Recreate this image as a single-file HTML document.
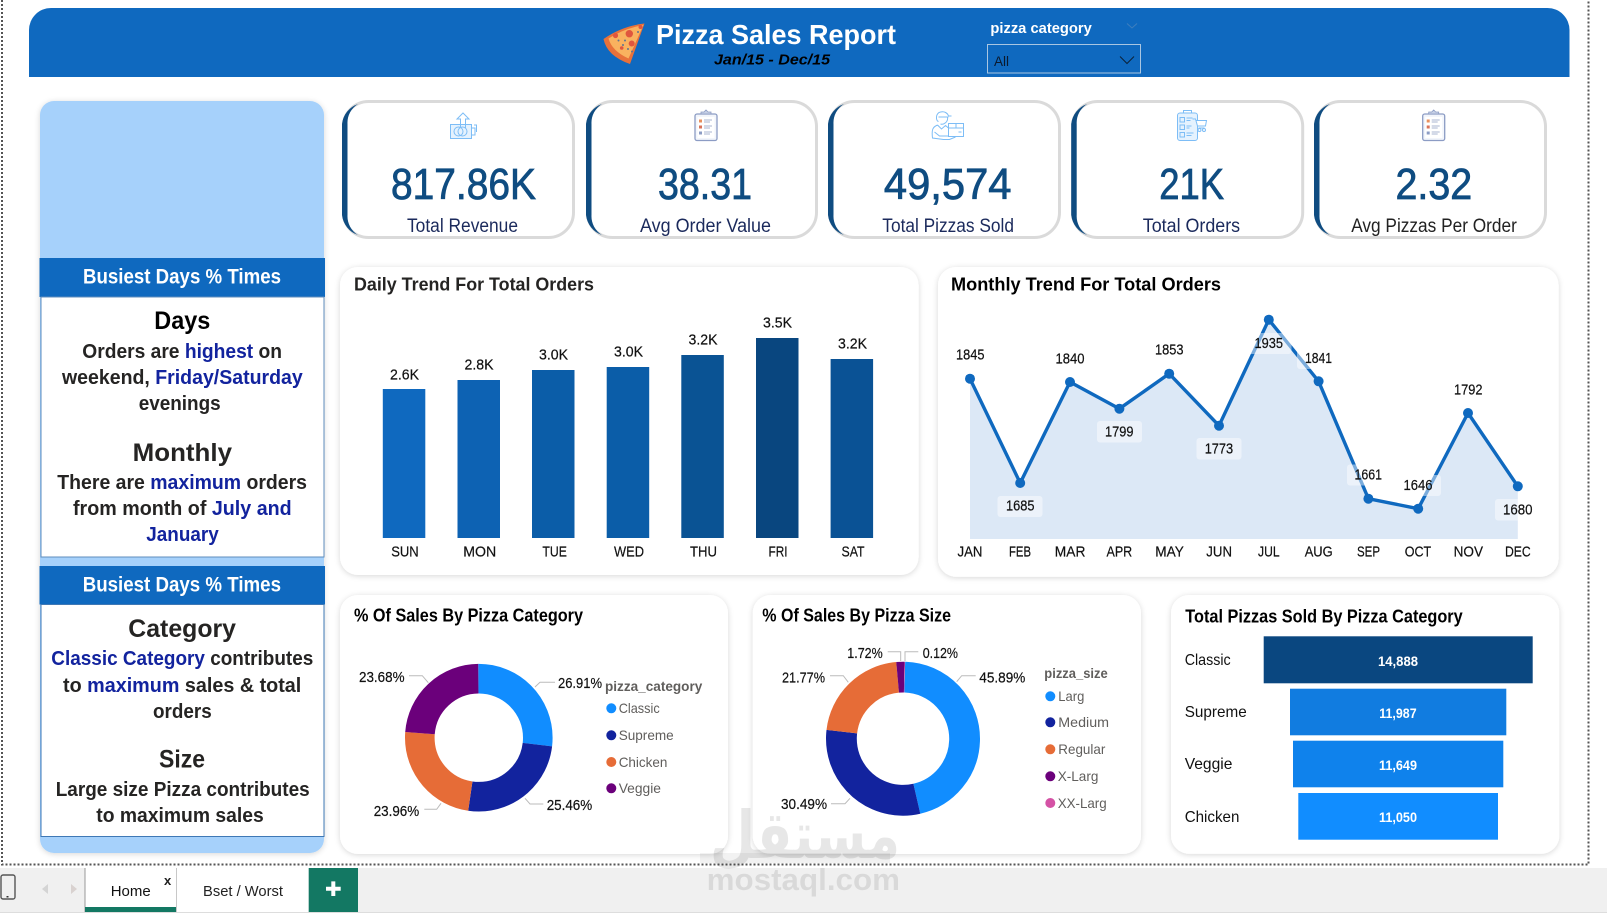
<!DOCTYPE html>
<html lang="en">
<head>
<meta charset="utf-8">
<title>Pizza Sales Report</title>
<style>
html,body{margin:0;padding:0;background:#fff;width:1607px;height:915px;overflow:hidden}
svg{display:block}
text{font-family:"Liberation Sans",sans-serif;white-space:pre}
.b{font-weight:700}
.side{font-weight:700;font-size:20px;fill:#252423}
.h{font-weight:700;font-size:25px;fill:#252423}
.blue{fill:#12239E}
.val{font-weight:400;font-size:44px;fill:#0F4C81;stroke:#0F4C81;stroke-width:.8}
.lab{font-size:19px;fill:#1B2A5C}
.ttl{font-weight:700;font-size:18px;fill:#1a1a1a}
.t{font-size:14.5px;fill:#111;stroke:#111;stroke-width:.2}
.ax{font-size:14.5px;fill:#111;stroke:#111;stroke-width:.2}
.pct{font-size:15px;fill:#111;stroke:#111;stroke-width:.2}
.lg{font-size:14px;fill:#605E5C}
.lgt{font-size:14px;font-weight:700;fill:#605E5C}
.fn{font-size:13.5px;font-weight:700;fill:#fff}
.cat{font-size:16px;fill:#111}
.ld{fill:none;stroke:#bbb;stroke-width:1}
.ic{fill:none;stroke:#7DBDF6;stroke-width:1}
</style>
</head>
<body>
<svg xmlns="http://www.w3.org/2000/svg" width="1607" height="915" viewBox="0 0 1607 915">
<defs>
<filter id="s" x="-10%" y="-10%" width="120%" height="120%"><feDropShadow dx="0" dy="1" stdDeviation="3" flood-color="#000" flood-opacity=".16"/></filter>
</defs>
<rect width="1607" height="915" fill="#fff"/>

<!-- dotted page frame -->
<path d="M2 0V864.5H1588.5V0" fill="none" stroke="#555" stroke-width="2" stroke-dasharray="2 2"/>

<!-- header -->
<path d="M29 77V30A22 22 0 0 1 51 8H1547.5A22 22 0 0 1 1569.5 30V77Z" fill="#0F69BF"/>
<!-- pizza slice -->
<path d="M644.5 23.5Q622 26 603.5 39Q607 56 630 64Z" fill="#E8713A"/>
<path d="M643.5 25Q624 28.5 608.5 38.5Q612 51 628.5 58.5Z" fill="#F9B25F"/>
<circle cx="629.3" cy="33.7" r="3.7" fill="#E0563E"/>
<circle cx="631.7" cy="43.5" r="3" fill="#E0563E"/>
<circle cx="615.5" cy="35.5" r="2.6" fill="#E0563E"/>
<circle cx="640.5" cy="27" r="2" fill="#E0563E"/>
<circle cx="621.7" cy="48" r="1.8" fill="#E0563E"/>
<circle cx="618.5" cy="40.5" r="1" fill="#5E7391"/><circle cx="625" cy="40.5" r="1" fill="#5E7391"/><circle cx="623" cy="45" r="1" fill="#5E7391"/><circle cx="632" cy="51.5" r="1" fill="#5E7391"/><circle cx="628" cy="49" r="1" fill="#5E7391"/><circle cx="638" cy="32" r="1" fill="#5E7391"/>

<text x="656" y="44" class="b" font-size="28" fill="#fff" textLength="240" lengthAdjust="spacingAndGlyphs">Pizza Sales Report</text>
<text x="714" y="64.5" font-size="15" font-weight="700" font-style="italic" fill="#000" textLength="116" lengthAdjust="spacingAndGlyphs">Jan/15 - Dec/15</text>
<text x="990.4" y="33" class="b" font-size="15" fill="#fff" textLength="101.4" lengthAdjust="spacingAndGlyphs">pizza category</text>
<path d="M1127 23.5L1132 28L1137 23.5" fill="none" stroke="#3E7FBE" stroke-width="1"/>
<rect x="987.5" y="44.5" width="153" height="28.5" fill="none" stroke="#A9C6E2" stroke-width="1"/>
<text x="994" y="66" font-size="14" fill="#0b1a2e" textLength="15" lengthAdjust="spacingAndGlyphs">All</text>
<path d="M1120 56.5L1127 63.5L1134 56.5" fill="none" stroke="#0b2238" stroke-width="1"/>

<!-- left panel -->
<rect x="40" y="101" width="284" height="752" rx="14" fill="#A6D1FB" filter="url(#s)"/>
<rect x="39.5" y="258" width="285.5" height="39" fill="#0F69BF"/>
<text x="83" y="283.5" class="b" font-size="21" fill="#fff" textLength="198" lengthAdjust="spacingAndGlyphs">Busiest Days % Times</text>
<rect x="41" y="297" width="283" height="260" fill="#fff" stroke="#5F8DBD" stroke-width="1"/>
<text x="154.3" y="329" class="h" style="fill:#000" textLength="56" lengthAdjust="spacingAndGlyphs">Days</text>
<text x="82.3" y="358" class="side" textLength="199.7" lengthAdjust="spacingAndGlyphs">Orders are <tspan class="blue">highest</tspan> on</text>
<text x="62" y="384" class="side" textLength="240.7" lengthAdjust="spacingAndGlyphs">weekend, <tspan class="blue">Friday/Saturday</tspan></text>
<text x="138.7" y="410" class="side" textLength="82" lengthAdjust="spacingAndGlyphs">evenings</text>
<text x="132.7" y="461" class="h" textLength="99.3" lengthAdjust="spacingAndGlyphs">Monthly</text>
<text x="57.3" y="489" class="side" textLength="249.7" lengthAdjust="spacingAndGlyphs">There are <tspan class="blue">maximum</tspan> orders</text>
<text x="73" y="515" class="side" textLength="218.7" lengthAdjust="spacingAndGlyphs">from month of <tspan class="blue">July and</tspan></text>
<text x="146.3" y="541" class="side blue" style="fill:#12239E" textLength="72.4" lengthAdjust="spacingAndGlyphs">January</text>

<rect x="39.5" y="566" width="285.5" height="38.5" fill="#0F69BF"/>
<text x="82.7" y="591.7" class="b" font-size="21" fill="#fff" textLength="198.3" lengthAdjust="spacingAndGlyphs">Busiest Days % Times</text>
<rect x="41" y="604.5" width="283" height="232" fill="#fff" stroke="#3F78B5" stroke-width="1"/>
<text x="128.3" y="637" class="h" textLength="107.7" lengthAdjust="spacingAndGlyphs">Category</text>
<text x="51.3" y="665" class="side" textLength="262" lengthAdjust="spacingAndGlyphs"><tspan class="blue">Classic Category</tspan> contributes</text>
<text x="63" y="692" class="side" textLength="238.3" lengthAdjust="spacingAndGlyphs">to <tspan class="blue">maximum</tspan> sales &amp; total</text>
<text x="153" y="718" class="side" textLength="58.7" lengthAdjust="spacingAndGlyphs">orders</text>
<text x="159" y="767.5" class="h" textLength="46" lengthAdjust="spacingAndGlyphs">Size</text>
<text x="55.7" y="796" class="side" textLength="254" lengthAdjust="spacingAndGlyphs">Large size Pizza contributes</text>
<text x="96.3" y="822" class="side" textLength="167.4" lengthAdjust="spacingAndGlyphs">to maximum sales</text>

<!-- KPI cards -->
<g fill="#fff" stroke="#DADADA" stroke-width="3">
<rect x="343.5" y="101.5" width="230" height="136" rx="25"/>
<rect x="587.5" y="101.5" width="229" height="136" rx="25"/>
<rect x="829.5" y="101.5" width="230" height="136" rx="25"/>
<rect x="1072.7" y="101.5" width="230" height="136" rx="25"/>
<rect x="1315.5" y="101.5" width="230" height="136" rx="25"/>
</g>
<g fill="#0F4C81">
<path d="M358 104A24 24 0 0 0 342 124V215A24 24 0 0 0 358 235A22 22 0 0 1 347.5 215V124A22 22 0 0 1 358 104Z"/>
<path transform="translate(244 0)" d="M358 104A24 24 0 0 0 342 124V215A24 24 0 0 0 358 235A22 22 0 0 1 347.5 215V124A22 22 0 0 1 358 104Z"/>
<path transform="translate(486 0)" d="M358 104A24 24 0 0 0 342 124V215A24 24 0 0 0 358 235A22 22 0 0 1 347.5 215V124A22 22 0 0 1 358 104Z"/>
<path transform="translate(729.2 0)" d="M358 104A24 24 0 0 0 342 124V215A24 24 0 0 0 358 235A22 22 0 0 1 347.5 215V124A22 22 0 0 1 358 104Z"/>
<path transform="translate(972 0)" d="M358 104A24 24 0 0 0 342 124V215A24 24 0 0 0 358 235A22 22 0 0 1 347.5 215V124A22 22 0 0 1 358 104Z"/>
</g>
<text x="391" y="199" class="val" textLength="145" lengthAdjust="spacingAndGlyphs">817.86K</text>
<text x="658" y="199" class="val" textLength="94" lengthAdjust="spacingAndGlyphs">38.31</text>
<text x="883.9" y="199" class="val" textLength="127.6" lengthAdjust="spacingAndGlyphs">49,574</text>
<text x="1159.2" y="199" class="val" textLength="64.8" lengthAdjust="spacingAndGlyphs">21K</text>
<text x="1395.5" y="199" class="val" textLength="76.7" lengthAdjust="spacingAndGlyphs">2.32</text>
<text x="407" y="232" class="lab" textLength="111" lengthAdjust="spacingAndGlyphs">Total Revenue</text>
<text x="640" y="232" class="lab" textLength="131" lengthAdjust="spacingAndGlyphs">Avg Order Value</text>
<text x="882.3" y="232" class="lab" textLength="131.7" lengthAdjust="spacingAndGlyphs">Total Pizzas Sold</text>
<text x="1142.8" y="232" class="lab" textLength="97.3" lengthAdjust="spacingAndGlyphs">Total Orders</text>
<text x="1351.2" y="232" class="lab" style="fill:#222" textLength="165.7" lengthAdjust="spacingAndGlyphs">Avg Pizzas Per Order</text>

<!-- KPI icons -->
<g class="ic">
<rect x="450.5" y="124.5" width="21" height="14" fill="#E5F2FE" style="fill:#E5F2FE"/><path d="M471.5 128H475V135H471.5M474 125H476.5V132"/>
<circle cx="458.5" cy="131.5" r="4.5"/><circle cx="462.5" cy="131.5" r="4.5"/>
<path d="M460.5 128V119H457L463 113L469 119H465.5V128"/>
</g>
<g>
<rect x="695" y="114" width="22" height="26.5" rx="2" fill="#F2F5FB" stroke="#8C9CC4" stroke-width="1.3"/>
<rect x="697.5" y="117" width="17" height="21" fill="#fff"/>
<path d="M701 114V112H704L706 110L708 112H711V114Z" fill="#C6D0E6" stroke="#8C9CC4" stroke-width=".8"/>
<rect x="699" y="119.5" width="3" height="3" fill="#E8905F"/><rect x="699" y="125.5" width="3" height="3" fill="#D9735A"/><rect x="699" y="131.5" width="3" height="3" fill="#8C9CC4"/>
<path d="M704 120H712M704 122H710M704 126H712M704 128H710M704 132H712M704 134H710" stroke="#8C9CC4" stroke-width=".8"/>
</g>
<g class="ic" transform="translate(-1.5 0)">
<path d="M940 121.5C937 121 937 113 942 112C946 111 949 113 950 116H953M940 117H950M949 117C950 122 945 125 942 124"/>
<path d="M939 125C934 127 933 130 934 138L945 139.5H951L957 137M939 125L943 129L947 125.5L950 128"/>
<rect x="950" y="123.5" width="15" height="13"/><path d="M950 128H965M957.5 123.5V128M960 132H963"/>
<path d="M936 132L941 136H950"/>
</g>
<g transform="translate(-5.5 0)">
<rect x="1183" y="113" width="20" height="27.5" rx="2.5" class="ic" style="fill:#E5F2FE"/>
<path d="M1189 113V110.5H1197V113" class="ic"/>
<rect x="1185.5" y="117.5" width="4.5" height="4.5" class="ic"/><rect x="1185.5" y="125" width="4.5" height="4.5" class="ic"/><rect x="1185.5" y="132.5" width="4.5" height="4.5" class="ic"/>
<path d="M1192 118H1198M1192 120.5H1196M1192 126H1197M1192 128H1195M1192 133H1199M1192 135.5H1197" class="ic"/>
<path d="M1198 119H1201L1203 126H1211L1212 120.5H1201.5M1204 128H1210" fill="#fff" stroke="#7DBDF6" stroke-width="1"/>
<circle cx="1205" cy="130" r="1.5" class="ic"/><circle cx="1209.5" cy="130" r="1.5" class="ic"/>
</g>
<g transform="translate(727.7 0)">
<rect x="695" y="114" width="22" height="26.5" rx="2" fill="#F2F5FB" stroke="#8C9CC4" stroke-width="1.3"/>
<rect x="697.5" y="117" width="17" height="21" fill="#fff"/>
<path d="M701 114V112H704L706 110L708 112H711V114Z" fill="#C6D0E6" stroke="#8C9CC4" stroke-width=".8"/>
<rect x="699" y="119.5" width="3" height="3" fill="#E8905F"/><rect x="699" y="125.5" width="3" height="3" fill="#D9735A"/><rect x="699" y="131.5" width="3" height="3" fill="#8C9CC4"/>
<path d="M704 120H712M704 122H710M704 126H712M704 128H710M704 132H712M704 134H710" stroke="#8C9CC4" stroke-width=".8"/>
</g>

<!-- daily chart -->
<rect x="340" y="267" width="578.6" height="308" rx="18" fill="#fff" filter="url(#s)"/>
<text x="354" y="290.7" class="ttl" style="fill:#252423" textLength="240" lengthAdjust="spacingAndGlyphs">Daily Trend For Total Orders</text>
<rect x="382.8" y="389" width="42.5" height="149" fill="#0F69BF"/>
<rect x="457.5" y="380" width="42.5" height="158" fill="#0D62B3"/>
<rect x="532" y="370" width="42.5" height="168" fill="#0B5DA8"/>
<rect x="606.7" y="367" width="42.5" height="171" fill="#0B5DA8"/>
<rect x="681.3" y="355" width="42.5" height="183" fill="#0A5394"/>
<rect x="756" y="338" width="42.5" height="200" fill="#09467F"/>
<rect x="830.6" y="359" width="42.5" height="179" fill="#0A5295"/>
<text x="390" y="379.5" class="t" textLength="29" lengthAdjust="spacingAndGlyphs">2.6K</text>
<text x="464.5" y="369.5" class="t" textLength="29" lengthAdjust="spacingAndGlyphs">2.8K</text>
<text x="539" y="359.5" class="t" textLength="29" lengthAdjust="spacingAndGlyphs">3.0K</text>
<text x="614" y="356.5" class="t" textLength="29" lengthAdjust="spacingAndGlyphs">3.0K</text>
<text x="688.5" y="344.5" class="t" textLength="29" lengthAdjust="spacingAndGlyphs">3.2K</text>
<text x="763" y="327.5" class="t" textLength="29" lengthAdjust="spacingAndGlyphs">3.5K</text>
<text x="838" y="348.5" class="t" textLength="29" lengthAdjust="spacingAndGlyphs">3.2K</text>
<text x="391.2" y="556.5" class="ax" textLength="27.5" lengthAdjust="spacingAndGlyphs">SUN</text>
<text x="463.2" y="556.5" class="ax" textLength="33" lengthAdjust="spacingAndGlyphs">MON</text>
<text x="542.4" y="556.5" class="ax" textLength="24.5" lengthAdjust="spacingAndGlyphs">TUE</text>
<text x="614" y="556.5" class="ax" textLength="30" lengthAdjust="spacingAndGlyphs">WED</text>
<text x="690" y="556.5" class="ax" textLength="27" lengthAdjust="spacingAndGlyphs">THU</text>
<text x="768.5" y="556.5" class="ax" textLength="19" lengthAdjust="spacingAndGlyphs">FRI</text>
<text x="841.5" y="556.5" class="ax" textLength="23" lengthAdjust="spacingAndGlyphs">SAT</text>

<!-- monthly chart -->
<rect x="938" y="267" width="620.6" height="309.7" rx="18" fill="#fff" filter="url(#s)"/>
<text x="951" y="290.7" class="ttl" style="fill:#000" textLength="270" lengthAdjust="spacingAndGlyphs">Monthly Trend For Total Orders</text>
<path d="M970 378.7L1020.2 483L1070 382L1119.4 408.7L1169.2 373.7L1219 425.7L1268.8 319.7L1318.6 381.3L1368.4 498.7L1418.2 508.7L1468 413L1517.8 486.3V539H970Z" fill="#DCE8F6"/>
<path d="M970 378.7L1020.2 483L1070 382L1119.4 408.7L1169.2 373.7L1219 425.7L1268.8 319.7L1318.6 381.3L1368.4 498.7L1418.2 508.7L1468 413L1517.8 486.3" fill="none" stroke="#0F69BF" stroke-width="3.4" stroke-linejoin="round"/>
<g fill="#0F69BF">
<circle cx="970" cy="378.7" r="5"/><circle cx="1020.2" cy="483" r="5"/><circle cx="1070" cy="382" r="5"/><circle cx="1119.4" cy="408.7" r="5"/><circle cx="1169.2" cy="373.7" r="5"/><circle cx="1219" cy="425.7" r="5"/><circle cx="1268.8" cy="319.7" r="5"/><circle cx="1318.6" cy="381.3" r="5"/><circle cx="1368.4" cy="498.7" r="5"/><circle cx="1418.2" cy="508.7" r="5"/><circle cx="1468" cy="413" r="5"/><circle cx="1517.8" cy="486.3" r="5"/>
</g>
<g fill="#fff" fill-opacity=".45">
<rect x="997.5" y="496" width="45" height="21" rx="3"/>
<rect x="1097" y="421" width="45" height="21.5" rx="3"/>
<rect x="1196.5" y="438" width="45" height="21.5" rx="3"/>
<rect x="1246.5" y="333" width="45" height="21" rx="3"/>
<rect x="1297" y="348" width="38" height="21" rx="3"/>
<rect x="1347" y="464.5" width="45" height="21" rx="3"/>
<rect x="1397" y="475" width="44" height="21" rx="3"/>
<rect x="1495" y="499" width="36" height="21.5" rx="3"/>
</g>
<text x="956" y="359.5" class="t" textLength="28.5" lengthAdjust="spacingAndGlyphs">1845</text>
<text x="1006" y="510.5" class="t" textLength="28.5" lengthAdjust="spacingAndGlyphs">1685</text>
<text x="1055.5" y="363.5" class="t" textLength="29" lengthAdjust="spacingAndGlyphs">1840</text>
<text x="1105" y="436.5" class="t" textLength="28.5" lengthAdjust="spacingAndGlyphs">1799</text>
<text x="1155" y="354.5" class="t" textLength="28.5" lengthAdjust="spacingAndGlyphs">1853</text>
<text x="1204.7" y="453.5" class="t" textLength="28.5" lengthAdjust="spacingAndGlyphs">1773</text>
<text x="1254.5" y="347.8" class="t" textLength="28.5" lengthAdjust="spacingAndGlyphs">1935</text>
<text x="1305" y="362.8" class="t" textLength="27" lengthAdjust="spacingAndGlyphs">1841</text>
<text x="1354.5" y="479.5" class="t" textLength="27.5" lengthAdjust="spacingAndGlyphs">1661</text>
<text x="1403.5" y="489.8" class="t" textLength="29" lengthAdjust="spacingAndGlyphs">1646</text>
<text x="1454" y="394.5" class="t" textLength="28.5" lengthAdjust="spacingAndGlyphs">1792</text>
<text x="1503" y="514.5" class="t" textLength="29.5" lengthAdjust="spacingAndGlyphs">1680</text>
<text x="957.5" y="556.5" class="ax" textLength="25" lengthAdjust="spacingAndGlyphs">JAN</text>
<text x="1009" y="556.5" class="ax" textLength="22" lengthAdjust="spacingAndGlyphs">FEB</text>
<text x="1054.8" y="556.5" class="ax" textLength="30.6" lengthAdjust="spacingAndGlyphs">MAR</text>
<text x="1106.5" y="556.5" class="ax" textLength="25.7" lengthAdjust="spacingAndGlyphs">APR</text>
<text x="1155.3" y="556.5" class="ax" textLength="28.6" lengthAdjust="spacingAndGlyphs">MAY</text>
<text x="1206.3" y="556.5" class="ax" textLength="25.7" lengthAdjust="spacingAndGlyphs">JUN</text>
<text x="1258" y="556.5" class="ax" textLength="21.6" lengthAdjust="spacingAndGlyphs">JUL</text>
<text x="1304.7" y="556.5" class="ax" textLength="28" lengthAdjust="spacingAndGlyphs">AUG</text>
<text x="1357" y="556.5" class="ax" textLength="23" lengthAdjust="spacingAndGlyphs">SEP</text>
<text x="1404.7" y="556.5" class="ax" textLength="26.5" lengthAdjust="spacingAndGlyphs">OCT</text>
<text x="1453.6" y="556.5" class="ax" textLength="29.4" lengthAdjust="spacingAndGlyphs">NOV</text>
<text x="1505" y="556.5" class="ax" textLength="25.7" lengthAdjust="spacingAndGlyphs">DEC</text>

<!-- donut 1 -->
<rect x="340" y="595" width="388" height="259" rx="18" fill="#fff" filter="url(#s)"/>
<text x="354" y="621.5" class="ttl" style="fill:#000" textLength="229" lengthAdjust="spacingAndGlyphs">% Of Sales By Pizza Category</text>
<g fill="none" stroke-width="29.6">
<circle cx="478.8" cy="737.7" r="59" stroke="#118DFF" pathLength="100" stroke-dasharray="26.91 73.09" transform="rotate(-90 478.8 737.7)"/>
<circle cx="478.8" cy="737.7" r="59" stroke="#12239E" pathLength="100" stroke-dasharray="25.46 74.54" stroke-dashoffset="-26.91" transform="rotate(-90 478.8 737.7)"/>
<circle cx="478.8" cy="737.7" r="59" stroke="#E66C37" pathLength="100" stroke-dasharray="23.96 76.04" stroke-dashoffset="-52.37" transform="rotate(-90 478.8 737.7)"/>
<circle cx="478.8" cy="737.7" r="59" stroke="#6B007B" pathLength="100" stroke-dasharray="23.67 76.33" stroke-dashoffset="-76.33" transform="rotate(-90 478.8 737.7)"/>
</g>
<path class="ld" d="M535 687L540 682.3H555M525 798.3L530 804H543.3M441 803.3L436.7 809.3H424.3M428.3 682.7L422.3 675.7H409"/>
<text x="558" y="688" class="pct" textLength="44" lengthAdjust="spacingAndGlyphs">26.91%</text>
<text x="546.7" y="810" class="pct" textLength="45.5" lengthAdjust="spacingAndGlyphs">25.46%</text>
<text x="373.7" y="816" class="pct" textLength="45.5" lengthAdjust="spacingAndGlyphs">23.96%</text>
<text x="359" y="682" class="pct" textLength="45.5" lengthAdjust="spacingAndGlyphs">23.68%</text>
<text x="605" y="691" class="lgt" textLength="97.3" lengthAdjust="spacingAndGlyphs">pizza_category</text>
<circle cx="611.3" cy="708.3" r="5" fill="#118DFF"/><text x="618.7" y="713" class="lg" textLength="41" lengthAdjust="spacingAndGlyphs">Classic</text>
<circle cx="611.3" cy="735.3" r="5" fill="#12239E"/><text x="618.7" y="740" class="lg" textLength="55" lengthAdjust="spacingAndGlyphs">Supreme</text>
<circle cx="611.3" cy="762" r="5" fill="#E66C37"/><text x="618.7" y="767" class="lg" textLength="48.7" lengthAdjust="spacingAndGlyphs">Chicken</text>
<circle cx="611.3" cy="788.3" r="5" fill="#6B007B"/><text x="618.7" y="793" class="lg" textLength="42.3" lengthAdjust="spacingAndGlyphs">Veggie</text>

<!-- donut 2 -->
<rect x="752.7" y="595" width="388.3" height="259" rx="18" fill="#fff" filter="url(#s)"/>
<text x="762.3" y="621.5" class="ttl" style="fill:#000" textLength="188.7" lengthAdjust="spacingAndGlyphs">% Of Sales By Pizza Size</text>
<g fill="none" stroke-width="30.8" transform="rotate(-88 903 738.7)">
<circle cx="903" cy="738.7" r="61.6" stroke="#118DFF" pathLength="100" stroke-dasharray="45.89 54.11"/>
<circle cx="903" cy="738.7" r="61.6" stroke="#12239E" pathLength="100" stroke-dasharray="30.49 69.51" stroke-dashoffset="-45.89"/>
<circle cx="903" cy="738.7" r="61.6" stroke="#E66C37" pathLength="100" stroke-dasharray="21.78 78.22" stroke-dashoffset="-76.38"/>
<circle cx="903" cy="738.7" r="61.6" stroke="#6B007B" pathLength="100" stroke-dasharray="1.72 98.28" stroke-dashoffset="-98.16"/>
<circle cx="903" cy="738.7" r="61.6" stroke="#D452A5" pathLength="100" stroke-dasharray="0.12 99.88" stroke-dashoffset="-99.88"/>
</g>
<path class="ld" d="M956.7 681.7L961.7 675.7H975.7M850 798.3L845 803.7H831M848.3 682.3L843.3 675.7H830M900.7 661V651.7H887.7M905 661V651.7H918.3"/>
<text x="979.3" y="682.5" class="pct" textLength="46" lengthAdjust="spacingAndGlyphs">45.89%</text>
<text x="781" y="809" class="pct" textLength="46" lengthAdjust="spacingAndGlyphs">30.49%</text>
<text x="782" y="682.5" class="pct" textLength="43" lengthAdjust="spacingAndGlyphs">21.77%</text>
<text x="847.3" y="658" class="pct" textLength="35.4" lengthAdjust="spacingAndGlyphs">1.72%</text>
<text x="922.7" y="658" class="pct" textLength="35.3" lengthAdjust="spacingAndGlyphs">0.12%</text>
<text x="1044.3" y="678" class="lgt" textLength="63.4" lengthAdjust="spacingAndGlyphs">pizza_size</text>
<circle cx="1050.3" cy="696.3" r="5" fill="#118DFF"/><text x="1058.3" y="701" class="lg" textLength="26" lengthAdjust="spacingAndGlyphs">Larg</text>
<circle cx="1050.3" cy="722.3" r="5" fill="#12239E"/><text x="1058.3" y="727" class="lg" textLength="50.7" lengthAdjust="spacingAndGlyphs">Medium</text>
<circle cx="1050.3" cy="749.3" r="5" fill="#E66C37"/><text x="1058.3" y="754" class="lg" textLength="47" lengthAdjust="spacingAndGlyphs">Regular</text>
<circle cx="1050.3" cy="776.3" r="5" fill="#6B007B"/><text x="1057.7" y="781" class="lg" textLength="40.7" lengthAdjust="spacingAndGlyphs">X-Larg</text>
<circle cx="1050.3" cy="803" r="5" fill="#D452A5"/><text x="1057.7" y="808" class="lg" textLength="49" lengthAdjust="spacingAndGlyphs">XX-Larg</text>

<!-- funnel -->
<rect x="1171" y="595" width="388.3" height="258.7" rx="18" fill="#fff" filter="url(#s)"/>
<text x="1185.3" y="622.5" class="ttl" style="fill:#000" textLength="277.4" lengthAdjust="spacingAndGlyphs">Total Pizzas Sold By Pizza Category</text>
<rect x="1263.7" y="636.3" width="269" height="47" fill="#0A4780"/>
<rect x="1290" y="688.7" width="216.3" height="46.6" fill="#117CE0"/>
<rect x="1293" y="740.7" width="210.3" height="46.6" fill="#0F82EC"/>
<rect x="1298.3" y="793" width="199.7" height="46.7" fill="#118DFF"/>
<text x="1378" y="666" class="fn" textLength="40" lengthAdjust="spacingAndGlyphs">14,888</text>
<text x="1379.3" y="718" class="fn" textLength="37.3" lengthAdjust="spacingAndGlyphs">11,987</text>
<text x="1379" y="770" class="fn" textLength="38" lengthAdjust="spacingAndGlyphs">11,649</text>
<text x="1379" y="822" class="fn" textLength="38" lengthAdjust="spacingAndGlyphs">11,050</text>
<text x="1184.7" y="665" class="cat" textLength="46" lengthAdjust="spacingAndGlyphs">Classic</text>
<text x="1184.7" y="717" class="cat" textLength="62" lengthAdjust="spacingAndGlyphs">Supreme</text>
<text x="1184.7" y="769" class="cat" textLength="47.7" lengthAdjust="spacingAndGlyphs">Veggie</text>
<text x="1184.7" y="822" class="cat" textLength="54.7" lengthAdjust="spacingAndGlyphs">Chicken</text>

<!-- tab bar -->
<rect x="0" y="868" width="1607" height="44" fill="#F0F0F0"/>
<rect x="0" y="912" width="1607" height="1" fill="#DDD"/>
<rect x="1" y="875" width="14" height="24" rx="2" fill="none" stroke="#555" stroke-width="1.4"/>
<rect x="6.5" y="896" width="2" height="1.5" fill="#333"/>
<path d="M48 884V894L42 889Z" fill="#D4D4D4"/><path d="M71 884V894L77 889Z" fill="#D9D2D0"/>
<rect x="85" y="868" width="91" height="44" fill="#fff"/>
<rect x="84.5" y="868" width="1" height="44" fill="#999"/>
<rect x="176" y="868" width="1" height="44" fill="#C8C8C8"/>
<rect x="85" y="907" width="91" height="5" fill="#137863"/>
<text x="110.7" y="896" font-size="15" fill="#111" textLength="40" lengthAdjust="spacingAndGlyphs">Home</text>
<text x="164" y="885" font-size="13" font-weight="700" fill="#222">x</text>
<rect x="177" y="868" width="131.7" height="44" fill="#fff"/>
<text x="203" y="896" font-size="15" fill="#222" textLength="80" lengthAdjust="spacingAndGlyphs">Bset / Worst</text>
<rect x="308.7" y="868" width="49.3" height="44" fill="#137863"/>
<path d="M326 888.7H340.7M333.3 881.4V896" stroke="#fff" stroke-width="4"/>

<!-- watermark -->
<rect x="700" y="853" width="190" height="10" fill="#000" opacity=".05"/>
<text x="710" y="858" style="font-family:'DejaVu Sans',sans-serif" font-size="66" font-weight="700" fill="#000" opacity=".09" textLength="190" lengthAdjust="spacingAndGlyphs">مستقل</text>
<text x="706.7" y="890" class="b" font-size="31" fill="#000" opacity=".09" textLength="193.3" lengthAdjust="spacingAndGlyphs">mostaql.com</text>
</svg>
</body>
</html>
